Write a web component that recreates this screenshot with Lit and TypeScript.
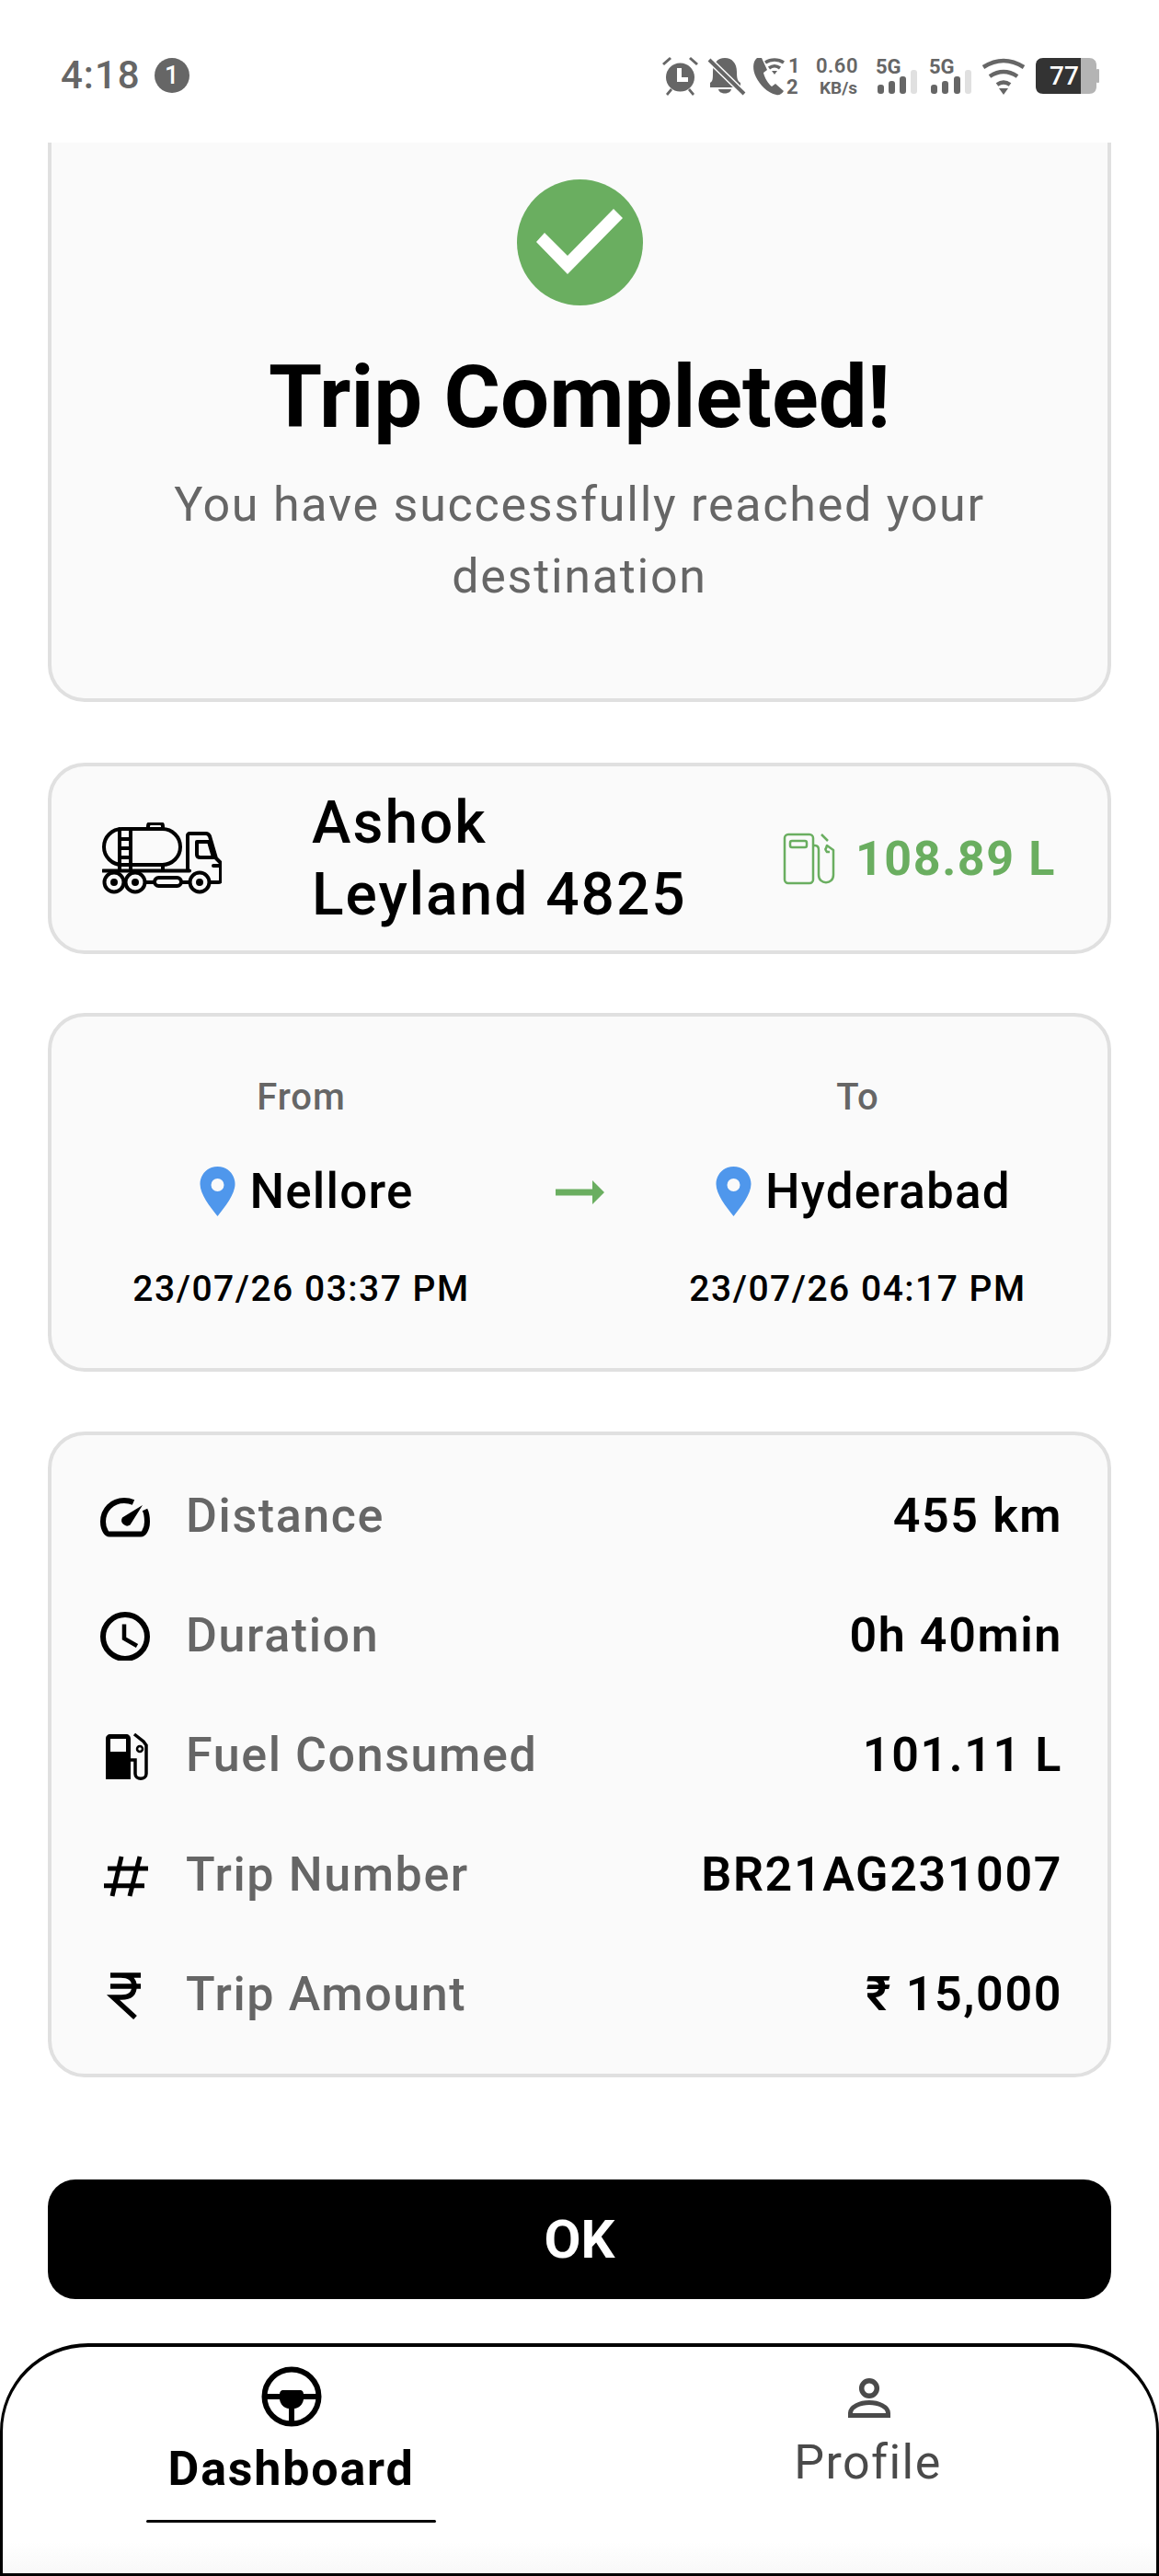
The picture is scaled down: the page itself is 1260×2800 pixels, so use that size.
import { LitElement, html, css } from "lit";
import { customElement } from "lit/decorators.js";

const pin = html`<svg class="pin" viewBox="0 0 40 56"><path fill="#4f97ec" fill-rule="evenodd" d="M20 1C9 1 1 9.500 1 20c0 11 11 25 19 35 8-10 19-24 19-35C39 9.500 31 1 20 1zm0 13a7 7 0 1 1 0 14 7 7 0 0 1 0-14z"/></svg>`;

const rows = [
  ["gauge", "Distance", "455 km"],
  ["clock", "Duration", "0h 40min"],
  ["fuel", "Fuel Consumed", "101.11 L"],
  ["hash", "Trip Number", "BR21AG231007"],
  ["rupee", "Trip Amount", "₹ 15,000"],
];

function rowIcon(n: string) {
  if (n === "gauge")
    return html`<svg class="ri" viewBox="0 0 56 56"><path fill="none" stroke="#000" stroke-width="6" d="M37 14C33.500 12.500 31 12 27 12 14 12 4 22 4 35c0 4 1 8 3 11 1 2 2 2.500 4 2.500h34c2 0 3-.5 4-2.500 2-3 3-7 3-11 0-5-.5-9-2.500-13"/><path d="M47 17 33.500 38.500A6 6 0 0 1 25 30.500z"/></svg>`;
  if (n === "clock")
    return html`<svg class="ri" viewBox="0 0 56 56"><circle cx="28" cy="30" r="24" fill="none" stroke="#000" stroke-width="6"/><path d="M27 16.500V32l14 8" fill="none" stroke="#000" stroke-width="4.500"/></svg>`;
  if (n === "fuel")
    return html`<svg class="ri" viewBox="0 0 56 56"><path fill-rule="evenodd" d="M7 55V11c0-3 2-5 5-5h17c3 0 5 2 5 5v44zM12 11v14h17V11z"/><path fill="none" stroke="#000" stroke-width="3.500" d="M34 34h5v15c0 7 12 7 12 0V18l-3-4-10-8"/><circle cx="44" cy="22" r="3" fill="none" stroke="#000" stroke-width="2.500"/></svg>`;
  if (n === "hash")
    return html`<svg class="ri" viewBox="0 0 56 56"><path fill="none" stroke="#000" stroke-width="5" d="M24 9 14 52M44 9 33 52M9 22h44M5 40.700h44"/></svg>`;
  return html`<svg class="ri" viewBox="0 0 56 56"><path fill="none" stroke="#000" stroke-width="5.500" d="M12 8h33M12 20h33M23 8c10 0 15 5 15 12 0 8-5 12-14 12h-9l24 22"/></svg>`;
}

@customElement("app-root")
export class AppRoot extends LitElement {
  static styles = css`
    :host { display: block; width: 1260px; height: 2800px; background: #fff; font-family: Roboto, sans-serif; color: #000; overflow: hidden; }
    .page { display: flex; flex-direction: column; height: 2800px; }
    .status { height: 155px; flex: none; box-sizing: border-box; padding: 60px 64px 0 66px; display: flex; justify-content: space-between; align-items: flex-start; color: #666; }
    .time { display: flex; align-items: center; gap: 15px; font-size: 42px; font-weight: 500; line-height: 44px; letter-spacing: 1px; }
    .dot { width: 38px; height: 38px; border-radius: 50%; background: #666; color: #fff; font-size: 27px; display: flex; align-items: center; justify-content: center; letter-spacing: 0; }
    .content { padding: 0 52px; display: flex; flex-direction: column; }
    .card { box-sizing: border-box; background: #fafafa; border: 4px solid #e0e0e0; border-radius: 40px; }
    .hero { height: 608px; border-top: none; border-radius: 0 0 40px 40px; display: flex; flex-direction: column; align-items: center; padding-top: 40px; }
    .check { width: 137px; height: 137px; display: block; }
    h1 { margin: 48px 0 0; font-size: 94px; line-height: 104px; font-weight: 700; }
    .sub { margin-top: 26px; width: 960px; text-align: center; font-size: 52px; line-height: 78px; letter-spacing: 1.750px; color: #666; }
    .vehicle { margin-top: 66px; height: 208px; display: flex; align-items: center; padding: 0 56px 0 55px; }
    .truck { width: 130px; height: 78px; flex: none; }
    .vname { margin-left: 98px; width: 425px; font-size: 64px; line-height: 78px; font-weight: 500; letter-spacing: 2px; padding-top: 2px; }
    .litres { margin-left: auto; display: flex; align-items: center; gap: 22px; color: #6aae60; font-size: 52px; font-weight: 700; letter-spacing: 1.600px; }
    .pump { width: 57px; height: 57px; }
    .route { margin-top: 64px; height: 390px; display: grid; grid-template-columns: 1fr 80px 1fr; padding: 0 9px; align-items: start; }
    .col { display: flex; flex-direction: column; align-items: center; padding-top: 64px; }
    .lbl { font-size: 40px; line-height: 48px; color: #666; font-weight: 500; letter-spacing: 1px; }
    .city { margin: 47px 0 0 11px; display: flex; align-items: center; gap: 14px; font-size: 53px; line-height: 62px; font-weight: 500; letter-spacing: 1.200px; }
    .pin { width: 41px; height: 56px; }
    .date { margin-top: 50px; font-size: 39px; line-height: 50px; font-weight: 500; letter-spacing: 1.500px; white-space: nowrap; }
    .arrow { width: 53px; height: 26px; margin: 178px auto 0; display: block; }
    .stats { margin-top: 65px; height: 702px; padding: 22px 49px 0 52px; }
    .row { height: 130px; display: flex; align-items: center; }
    .ri { width: 56px; height: 56px; flex: none; }
    .k { margin-left: 38px; font-size: 52px; font-weight: 500; color: #666; letter-spacing: 1.600px; }
    .v { margin-left: auto; font-size: 52px; font-weight: 600; letter-spacing: 1.600px; }
    .ok { margin-top: 111px; height: 130px; background: #000; color: #fff; border: none; border-radius: 30px; font: 700 58px Roboto, sans-serif; }
    .nav { margin-top: 48px; height: 253px; flex: none; box-sizing: border-box; border: 3px solid #000; border-top-width: 4px; border-radius: 96px 96px 0 0; background: linear-gradient(#fff 86%, #f8f8f8); display: grid; grid-template-columns: 1fr 1fr; }
    .tab { display: flex; flex-direction: column; align-items: center; }
    .tab svg { display: block; }
    .tab.a svg { width: 66px; height: 66px; margin-top: 21px; }
    .tab.p svg { width: 48px; height: 48px; margin: 31px 0 0 3px; }
    .tab.a span { margin-top: 15px; font-size: 52px; line-height: 62px; font-weight: 700; letter-spacing: 1.800px; }
    .tab.p span { margin-top: 16px; font-size: 52px; line-height: 62px; color: #4a4a4a; letter-spacing: 1.400px; }
    .line { margin-top: 24px; width: 315px; height: 3px; background: #000; border-radius: 2px; }
  `;

  render() {
    return html`<div class="page">
      <div class="status">
        <div class="time">4:18<span class="dot">1</span></div>
        <svg width="476" height="54" viewBox="0 0 476 54">
          <g fill="#666">
            <circle cx="19.500" cy="24" r="15.500"/><path d="M0 9 8 2l2 2-8 7zM39 9l-8-7-2 2 8 7zM4 42l5-6 2 2-5 6zM35 42l-5-6-2 2 5 6z"/>
            <path fill="#fff" d="M16 14h5v10h7v5H16z"/>
            <path d="M52 30c3-2 3-4 3-12 0-9 5-15 13-15s13 6 13 15c0 8 1 10 4 12v5H52zM61 37h14c-1 6-13 6-14 0z"/>
            <path stroke="#fff" stroke-width="7" d="M50 4 89 42"/><path stroke="#666" stroke-width="4" d="M51 5 89 42"/>
            <path d="M103 3c-5 4-5 13-1 21s12 17 22 19c3 1 6-1 8-4l-9-8-4 3c-4-3-8-10-9-15l4-3-6-13z"/>
            <path fill="none" stroke="#666" stroke-width="3.500" d="M112 8c6-4 14-4 20 0M116 14c4-3 8-3 12 0"/><path d="M119 17h6l-3 4z"/>
          </g>
          <g fill="#666" font-family="Roboto, sans-serif" font-weight="700">
            <text x="137" y="19" font-size="22">1</text><text x="135" y="42" font-size="22">2</text>
            <text x="167" y="19" font-size="22" letter-spacing="0.500" font-weight="600">0.60</text>
            <text x="171" y="42" font-size="19">KB/s</text>
            <text x="232" y="20" font-size="22">5G</text>
            <text x="290" y="20" font-size="22">5G</text>
          </g>
          <g fill="#666">
            <rect x="234" y="32" width="7" height="10" rx="3"/><rect x="246" y="28" width="7" height="14" rx="3"/><rect x="258" y="23" width="7" height="19" rx="3"/><rect x="270" y="16" width="7" height="26" rx="3" fill="#e0e0e0"/>
            <rect x="292" y="32" width="7" height="10" rx="3"/><rect x="304" y="28" width="7" height="14" rx="3"/><rect x="317" y="23" width="7" height="19" rx="3"/><rect x="329" y="16" width="7" height="26" rx="3" fill="#e0e0e0"/>
            <path fill="none" stroke="#666" stroke-width="4.500" d="M349 13Q371-1 393 13M356 23Q371 13 386 23M364 32Q371 27 378 32"/><path d="M366 36h10l-5 7z"/>
            <path fill="#333" d="M414 3h41v39h-41c-5 0-8-3-8-8V11c0-5 3-8 8-8z"/>
            <path fill="#b4b4b4" d="M455 3h9c5 0 8 3 8 8v23c0 5-3 8-8 8h-9z"/><rect x="472" y="15" width="3" height="15" rx="1" fill="#b4b4b4"/>
          </g>
          <text x="421" y="32" fill="#fff" font-family="Roboto, sans-serif" font-size="28" font-weight="500">77</text>
        </svg>
      </div>
      <div class="content">
        <div class="card hero">
          <svg class="check" viewBox="0 0 137 137"><circle cx="68.500" cy="68.500" r="68.500" fill="#6aae60"/><path d="M21 68 30 58 55 83 105 32 115 42 55 103z" fill="#fff"/></svg>
          <h1>Trip Completed!</h1>
          <div class="sub">You have successfully reached your destination</div>
        </div>
        <div class="card vehicle">
          <svg class="truck" viewBox="0 0 130 78" fill="none" stroke="#000" stroke-width="4" stroke-linecap="round" stroke-linejoin="round">
            <rect x="2" y="7" width="83" height="39" rx="19.500"/>
            <path d="M19 7v45M31 7v45M19 18h12M19 28h12M19 38h12M66 46v6M50 7V4c0-2 1-3 3-3h10c2 0 3 1 3 3v3"/>
            <path d="M93 52V14c0-1 1-2 2-2h18c2 0 3 1 4 3l7 24 4 4c1 1 1 2 1 3v17c0 1-1 2-3 2h-8"/>
            <path d="M103 21h13l5 17h-14c-3 0-4-1-4-3zM1 52.500h94"/>
            <path d="M94 65H86M57 65H48"/><rect x="57" y="60" width="29" height="9" rx="4.500"/>
            <circle cx="13" cy="65" r="10.500"/><circle cx="36" cy="65" r="10.500"/><circle cx="106" cy="65" r="10.500"/>
            <circle cx="13" cy="65" r="2" fill="#000"/><circle cx="36" cy="65" r="2" fill="#000"/><circle cx="106" cy="65" r="2" fill="#000"/>
            <path d="M121 47h6"/>
          </svg>
          <div class="vname">Ashok Leyland 4825</div>
          <div class="litres">
            <svg class="pump" viewBox="0 0 57 57" fill="none" stroke="#6aae60" stroke-width="2.500" stroke-linejoin="round"><rect x="2" y="2" width="31" height="53" rx="4"/><rect x="8" y="9" width="18" height="7" rx="2"/><path d="M33 14h2c3 0 4 2 4 5v27c0 11 16 11 16 0V19l-7-5-1 3c-1 1-1 1 1 4h3M42 2l7 7"/></svg>
            108.89 L
          </div>
        </div>
        <div class="card route">
          <div class="col">
            <div class="lbl">From</div>
            <div class="city">${pin}Nellore</div>
            <div class="date">23/07/26 03:37 PM</div>
          </div>
          <svg class="arrow" viewBox="0 0 53 26"><path d="M0 9.500h40V0l13 13-13 13v-9.500H0z" fill="#6aae60"/></svg>
          <div class="col">
            <div class="lbl">To</div>
            <div class="city">${pin}Hyderabad</div>
            <div class="date">23/07/26 04:17 PM</div>
          </div>
        </div>
        <div class="card stats">
          ${rows.map(([i, k, v]) => html`<div class="row">${rowIcon(i)}<div class="k">${k}</div><div class="v">${v}</div></div>`)}
        </div>
        <button class="ok">OK</button>
      </div>
      <div class="nav">
        <div class="tab a">
          <svg viewBox="0 0 66 66"><circle cx="33" cy="33" r="29.500" fill="none" stroke="#000" stroke-width="6"/><path d="M5 30h15c.5-3 1.500-4 3.500-4h19c2 0 3 1 3.500 4h15v6H46c-1 6-5 9.500-10 10v16h-6V46c-5-.5-9-4-10-10H5z"/></svg>
          <span>Dashboard</span>
          <div class="line"></div>
        </div>
        <div class="tab p">
          <svg viewBox="0 0 48 48"><circle cx="24" cy="14" r="8.300" fill="none" stroke="#4a4a4a" stroke-width="5.500"/><path d="M3.500 43.500V41C3.500 34 14 29.500 24 29.500S44.500 34 44.500 41v2.500z" fill="none" stroke="#4a4a4a" stroke-width="5"/></svg>
          <span>Profile</span>
        </div>
      </div>
    </div>`;
  }
}
